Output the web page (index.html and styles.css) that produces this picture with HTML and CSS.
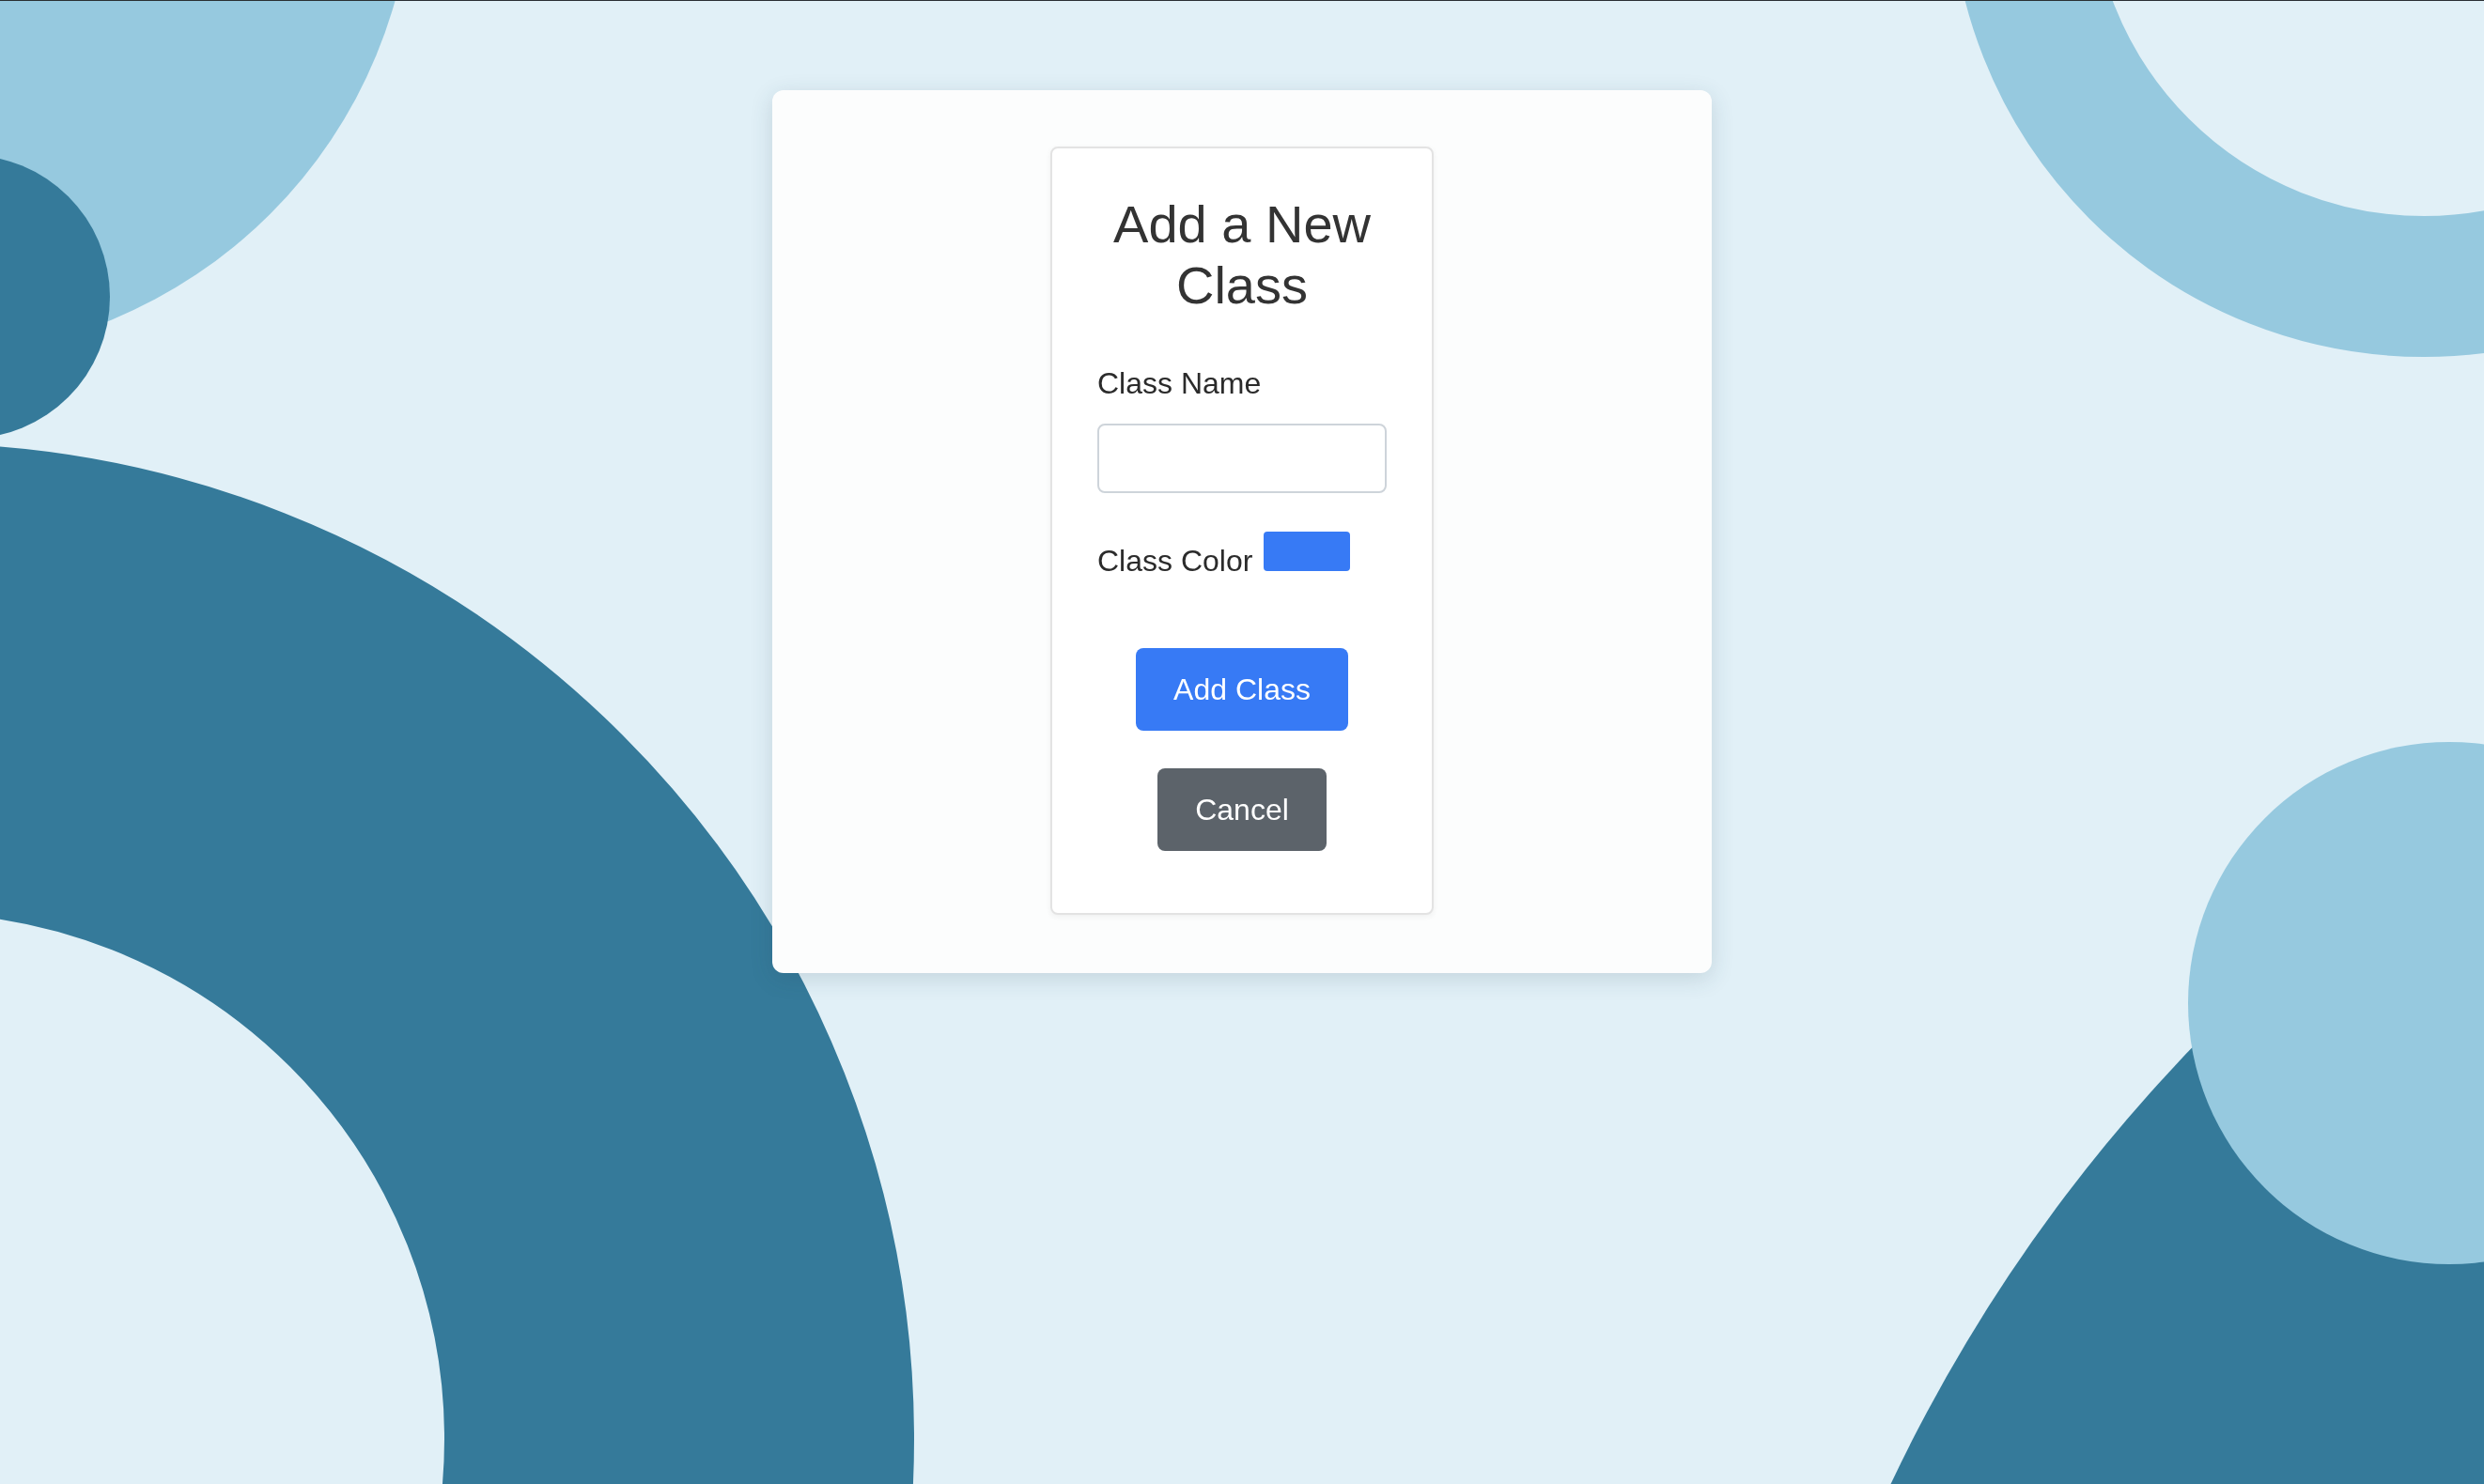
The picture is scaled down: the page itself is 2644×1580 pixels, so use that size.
FILE: index.html
```html
<!DOCTYPE html>
<html lang="en">
<head>
<meta charset="utf-8">
<title>Add a New Class</title>
<link rel="stylesheet" href="styles.css">
</head>
<body>
<div class="topline"></div>
<div class="bg" aria-hidden="true">
  <div class="shape tl-light"></div>
  <div class="shape l-dark"></div>
  <div class="shape bl-ring"></div>
  <div class="shape tr-ring"></div>
  <div class="shape br-dark"></div>
  <div class="shape br-light"></div>
</div>
<main class="page">
  <section class="panel">
    <form class="form-card">
      <h1 class="title">Add a New Class</h1>
      <label class="field-label" for="className">Class Name</label>
      <input class="text-input" id="className" type="text">
      <div class="color-row">
        <span class="color-label">Class Color</span><span class="swatch"></span>
      </div>
      <div class="actions">
        <button type="button" class="btn btn-primary">Add Class</button>
        <button type="button" class="btn btn-secondary">Cancel</button>
      </div>
    </form>
  </section>
</main>
</body>
</html>
```
FILE: styles.css
```css
html, body {
  margin: 0;
  padding: 0;
}

body {
  width: 2644px;
  height: 1580px;
  overflow: hidden;
  background: #e1f0f7;
  font-family: "Liberation Sans", Arial, Helvetica, sans-serif;
  color: #333;
  position: relative;
}

.topline {
  position: fixed;
  top: 0;
  left: 0;
  right: 0;
  height: 1px;
  background: #2a2f33;
  z-index: 10;
}

.bg {
  position: fixed;
  inset: 0;
  overflow: hidden;
  z-index: 0;
}

.shape {
  position: absolute;
  border-radius: 50%;
  box-sizing: border-box;
}

.tl-light {
  left: -600px;
  top: -660px;
  width: 1040px;
  height: 1040px;
  background: #96c9df;
}

.l-dark {
  left: -185px;
  top: 165px;
  width: 302px;
  height: 302px;
  background: #357a9a;
}

.bl-ring {
  left: -1147px;
  top: 472px;
  width: 2120px;
  height: 2120px;
  border: 500px solid #357a9a;
}

.tr-ring {
  left: 2076px;
  top: -628px;
  width: 1008px;
  height: 1008px;
  border: 150px solid #96c9df;
}

.br-dark {
  left: 1845px;
  top: 581px;
  width: 3490px;
  height: 3490px;
  background: #357a9a;
}

.br-light {
  left: 2329px;
  top: 790px;
  width: 556px;
  height: 556px;
  background: #96c9df;
}

.page {
  position: relative;
  z-index: 1;
  display: flex;
  flex-direction: column;
  align-items: center;
  padding-top: 96px;
}

.panel {
  width: 1000px;
  box-sizing: border-box;
  padding: 60px 0 62px;
  background: #fcfdfd;
  border-radius: 12px;
  box-shadow: 0 6px 24px rgba(40, 70, 90, 0.16);
  display: flex;
  justify-content: center;
  align-items: flex-start;
}

.form-card {
  width: 408px;
  box-sizing: border-box;
  background: #ffffff;
  border: 2px solid #e3e3e3;
  border-radius: 8px;
  padding: 48px 48px 66px;
  box-shadow: 0 2px 6px rgba(0, 0, 0, 0.06);
  display: flex;
  flex-direction: column;
}

.title {
  margin: 0;
  font-size: 56px;
  line-height: 65px;
  font-weight: normal;
  text-align: center;
  color: #333;
}

.field-label {
  display: block;
  margin-top: 54px;
  font-size: 32px;
  line-height: 37px;
  color: #2b2b2b;
}

.text-input {
  display: block;
  margin: 24px 0 0;
  width: 308px;
  height: 74px;
  box-sizing: border-box;
  border: 2px solid #ced4da;
  border-radius: 8px;
  background: #fff;
  padding: 0 16px;
  font-size: 32px;
  font-family: inherit;
}

.color-row {
  margin-top: 41px;
  font-size: 32px;
  line-height: 37px;
  color: #2b2b2b;
}

.color-label {
  margin-right: 12px;
}

.swatch {
  display: inline-block;
  width: 92px;
  height: 42px;
  border-radius: 4px;
  background: #377af5;
}

.actions {
  margin-top: 74px;
  display: flex;
  flex-direction: column;
  align-items: center;
  gap: 40px;
}

.btn {
  height: 88px;
  padding: 0 40px;
  border: none;
  border-radius: 8px;
  color: #ffffff;
  font-family: inherit;
  font-size: 32px;
  line-height: 37px;
  cursor: pointer;
}

.btn-primary {
  background: #377af5;
}

.btn-secondary {
  background: #5c636a;
}
```
